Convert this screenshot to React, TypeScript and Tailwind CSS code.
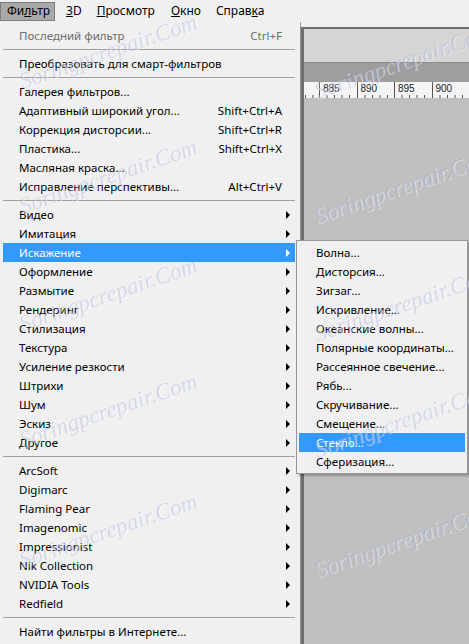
import React from "react";

type Item = { label: string; shortcut?: string; sub?: boolean; disabled?: boolean; active?: boolean };

const groups: Item[][] = [
  [{ label: "Последний фильтр", shortcut: "Ctrl+F", disabled: true }],
  [{ label: "Преобразовать для смарт-фильтров" }],
  [
    { label: "Галерея фильтров..." },
    { label: "Адаптивный широкий угол...", shortcut: "Shift+Ctrl+A" },
    { label: "Коррекция дисторсии...", shortcut: "Shift+Ctrl+R" },
    { label: "Пластика...", shortcut: "Shift+Ctrl+X" },
    { label: "Масляная краска..." },
    { label: "Исправление перспективы...", shortcut: "Alt+Ctrl+V" },
  ],
  [
    { label: "Видео", sub: true },
    { label: "Имитация", sub: true },
    { label: "Искажение", sub: true, active: true },
    { label: "Оформление", sub: true },
    { label: "Размытие", sub: true },
    { label: "Рендеринг", sub: true },
    { label: "Стилизация", sub: true },
    { label: "Текстура", sub: true },
    { label: "Усиление резкости", sub: true },
    { label: "Штрихи", sub: true },
    { label: "Шум", sub: true },
    { label: "Эскиз", sub: true },
    { label: "Другое", sub: true },
  ],
  [
    { label: "ArcSoft", sub: true },
    { label: "Digimarc", sub: true },
    { label: "Flaming Pear", sub: true },
    { label: "Imagenomic", sub: true },
    { label: "Impressionist", sub: true },
    { label: "Nik Collection", sub: true },
    { label: "NVIDIA Tools", sub: true },
    { label: "Redfield", sub: true },
  ],
  [{ label: "Найти фильтры в Интернете..." }],
];

const distort = [
  "Волна...",
  "Дисторсия...",
  "Зигзаг...",
  "Искривление...",
  "Океанские волны...",
  "Полярные координаты...",
  "Рассеянное свечение...",
  "Рябь...",
  "Скручивание...",
  "Смещение...",
  "Стекло...",
  "Сферизация...",
];

function Arrow({ white }: { white?: boolean }) {
  return (
    <svg width="5" height="8" viewBox="0 0 5 8" className="shrink-0">
      <path d="M0 0 L4 4 L0 8 Z" fill={white ? "#ffffff" : "#000000"} />
    </svg>
  );
}

function MenuRow({ item }: { item: Item }) {
  return (
    <div
      className={`flex h-[19px] items-center pl-[16px] ${item.sub ? "pr-[4px]" : "pr-[13px]"} ${
        item.active ? "bg-[#3399ff] text-white" : item.disabled ? "text-[#6d6d6d]" : "text-black"
      }`}
    >
      <span className="whitespace-nowrap">{item.label}</span>
      {item.shortcut && <span className="ml-auto whitespace-nowrap">{item.shortcut}</span>}
      {item.sub && (
        <span className="ml-auto">
          <Arrow white={item.active} />
        </span>
      )}
    </div>
  );
}

function Ruler() {
  const labels = ["885", "890", "895", "900"];
  return (
    <div className="flex h-[16px] bg-[#f4f4f4] overflow-hidden">
      <div className="w-[15px] shrink-0">
        <svg width="15" height="16" className="block">
          <line x1="1.5" y1="13" x2="1.5" y2="16" stroke="#555" />
          <line x1="9" y1="13" x2="9" y2="16" stroke="#555" />
        </svg>
      </div>
      {labels.map((l) => (
        <div key={l} className="w-[37.5px] shrink-0 border-l border-[#555]">
          <span className="block pl-[3px] pt-[1px] text-[10px] leading-[11px] text-[#222] font-['Liberation_Sans',sans-serif]">
            {l}
          </span>
          <svg width="37" height="4" className="block">
            <line x1="7" y1="1" x2="7" y2="4" stroke="#555" />
            <line x1="14.5" y1="1" x2="14.5" y2="4" stroke="#555" />
            <line x1="22" y1="1" x2="22" y2="4" stroke="#555" />
            <line x1="29.5" y1="1" x2="29.5" y2="4" stroke="#555" />
          </svg>
        </div>
      ))}
    </div>
  );
}

const marks = [
  { left: 15, top: 40 },
  { left: 15, top: 165 },
  { left: 15, top: 283 },
  { left: 15, top: 399 },
  { left: 15, top: 519 },
  { left: 310, top: 50 },
  { left: 310, top: 175 },
  { left: 310, top: 293 },
  { left: 310, top: 409 },
  { left: 310, top: 529 },
];

export default function App() {
  return (
    <div className="relative w-[469px] h-[644px] overflow-hidden bg-[#f0f0f0] font-['Noto_Sans','Open_Sans',sans-serif] text-[11.5px] leading-none select-none">
      <div className="flex h-full">
        {/* left: menubar + filter menu */}
        <div className="flex w-[301px] shrink-0 flex-col">
          <div className="flex h-[22px] items-center text-[12px]">
            <div className="flex h-[19px] w-[55px] items-center border border-[#7d7d7d] bg-[#a9a9a9] pl-[6px]">
              Фи<span className="underline">л</span>ьтр
            </div>
            <div className="ml-[11px]">
              <span className="underline">3</span>D
            </div>
            <div className="ml-[15px]">
              <span className="underline">П</span>росмотр
            </div>
            <div className="ml-[16px]">
              <span className="underline">О</span>кно
            </div>
            <div className="ml-[15px]">
              Справ<span className="underline">к</span>а
            </div>
          </div>
          <div className="flex-1 border-r border-[#979797] pl-[3px] pr-[5px] pt-[4px]">
            {groups.map((g, gi) => (
              <div key={gi}>
                {gi > 0 && (
                  <div className="flex h-[9px] items-center">
                    <div className="h-px w-full bg-[#a0a0a0]" />
                  </div>
                )}
                {g.map((it) => (
                  <MenuRow key={it.label} item={it} />
                ))}
              </div>
            ))}
          </div>
        </div>

        {/* right: workspace behind the menu */}
        <div className="flex flex-1 flex-col">
          <div className="h-[27px] shrink-0" />
          <div className="flex flex-1 flex-col border-l-[3px] border-t-2 border-[#6e6e6e]">
            <div className="h-[33px] bg-[#d5d5d5]" />
            <div className="h-[20px] border-t border-[#8a8a8a] bg-[#9e9e9e]" />
            <Ruler />
            <div className="flex-1 bg-[#c0c0c0]" />
          </div>
        </div>
      </div>

      {/* submenu */}
      <div className="absolute left-[296px] top-[240px] w-[172px] border border-[#979797] bg-[#f0f0f0] p-[2px] shadow-[2px_2px_2px_rgba(0,0,0,0.25)]">
        {distort.map((d) => (
          <div
            key={d}
            className={`flex h-[19px] items-center pl-[17px] ${
              d === "Стекло..." ? "bg-[#3399ff] text-white" : "text-black"
            }`}
          >
            {d}
          </div>
        ))}
      </div>

      {/* watermark */}
      <div className="pointer-events-none absolute inset-0">
        {marks.map((m, i) => (
          <div
            key={i}
            className="absolute origin-center -rotate-[19deg] whitespace-nowrap font-['Liberation_Serif',serif] text-[23px] italic text-[#8d96c8]/30 [text-shadow:1px_1px_0_rgba(255,255,255,0.45)]"
            style={{ left: m.left, top: m.top }}
          >
            Soringpcrepair.Com
          </div>
        ))}
      </div>
    </div>
  );
}
